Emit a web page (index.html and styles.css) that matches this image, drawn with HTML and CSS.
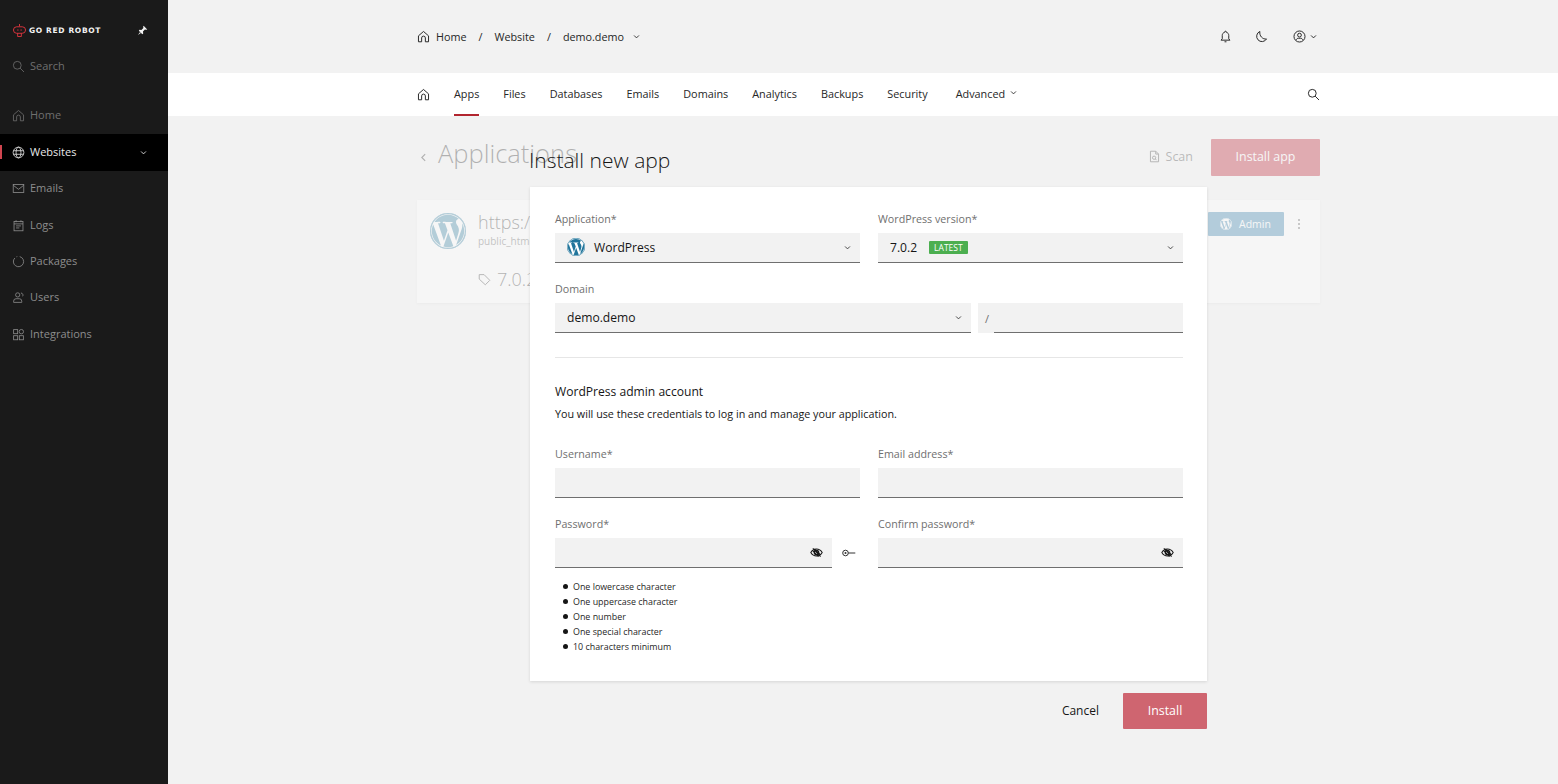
FILE: index.html
```html
<!DOCTYPE html>
<html lang="en">
<head>
<meta charset="utf-8">
<title>Install new app</title>
<link rel="stylesheet" href="styles.css">
</head>
<body>
<svg class="defs" aria-hidden="true">
  <symbol id="home" viewBox="0 0 16 16"><path d="M1.800 7.200 8 1.800l6.200 5.400V14.500h-3.900V9.800a2.300 2.300 0 0 0-4.600 0v4.700H1.800z"/></symbol>
  <symbol id="search" viewBox="0 0 16 16"><circle cx="6.500" cy="6.500" r="4.800"/><path d="m10 10 4.800 4.800"/></symbol>
  <symbol id="globe" viewBox="0 0 16 16"><circle cx="8" cy="8" r="6.600"/><ellipse cx="8" cy="8" rx="3" ry="6.600"/><path d="M1.800 5.800h12.400M1.800 10.200h12.400"/></symbol>
  <symbol id="mail" viewBox="0 0 16 16"><rect x="1.500" y="3" width="13" height="10"/><path d="m1.500 4 6.500 5 6.500-5"/></symbol>
  <symbol id="logs" viewBox="0 0 16 16"><rect x="2.500" y="3" width="11" height="11.500"/><path d="M5 1.500V4M11 1.500V4M2.500 6h11M5 8.500h6M5 11h4"/></symbol>
  <symbol id="pkg" viewBox="0 0 16 16"><path d="M9.500 2a6.300 6.300 0 1 1-6 1.700M5.500 2.200l1-.3"/></symbol>
  <symbol id="users" viewBox="0 0 16 16"><circle cx="7" cy="4.800" r="2.600"/><path d="M2 14v-1.500A3 3 0 0 1 5 9.500h4a3 3 0 0 1 3 3V14zM11 2.500a2.500 2.500 0 0 1 2 4"/></symbol>
  <symbol id="integrations" viewBox="0 0 16 16"><rect x="2" y="2" width="5" height="5"/><circle cx="11.500" cy="4.500" r="2.700"/><rect x="2" y="9.500" width="5" height="5"/><rect x="9" y="9.500" width="5" height="5"/></symbol>
  <symbol id="chev" viewBox="0 0 8 8"><path d="m1.200 2.800 2.800 2.800 2.800-2.800"/></symbol>
  <symbol id="wp" viewBox="0 0 24 24"><circle class="wp-disc" cx="12" cy="12" r="12"/><path class="wp-mark" d="M21.469 6.825c.84 1.537 1.318 3.3 1.318 5.175 0 3.979-2.156 7.456-5.363 9.325l3.295-9.527c.615-1.54.82-2.771.82-3.864 0-.405-.026-.78-.07-1.11m-7.981.105c.647-.03 1.232-.105 1.232-.105.582-.075.514-.93-.067-.899 0 0-1.755.135-2.88.135-1.064 0-2.85-.15-2.85-.15-.585-.03-.661.855-.075.885 0 0 .54.061 1.125.09l1.68 4.605-2.37 7.08L5.354 6.9c.649-.03 1.234-.1 1.234-.1.585-.075.516-.93-.065-.896 0 0-1.746.138-2.874.138-.2 0-.438-.008-.69-.015C4.911 3.15 8.235 1.215 12 1.215c2.809 0 5.365 1.072 7.286 2.833-.046-.003-.091-.009-.141-.009-1.06 0-1.812.923-1.812 1.914 0 .89.513 1.643 1.06 2.531.411.72.89 1.643.89 2.977 0 .915-.354 1.994-.821 3.479l-1.075 3.585-3.9-11.61.001.014zM12 22.784c-1.059 0-2.081-.153-3.048-.437l3.237-9.406 3.315 9.087c.024.053.05.101.078.149-1.12.393-2.325.609-3.582.609M1.211 12c0-1.564.336-3.05.935-4.39L7.29 21.709C3.694 19.96 1.212 16.271 1.211 12M12 0C5.385 0 0 5.385 0 12s5.385 12 12 12 12-5.385 12-12S18.615 0 12 0"/><circle class="wp-ring" cx="12" cy="12" r="11.600"/></symbol>
  <symbol id="eyeoff" viewBox="0 0 16 16"><path d="M1 8s2.600-4.300 7-4.300S15 8 15 8s-2.600 4.300-7 4.300S1 8 1 8z"/><circle cx="8" cy="8" r="2.800"/><path d="M3.500 3l9.500 10M5.500 3.500l7.500 7.500M3 5.500l7.500 7.500"/></symbol>
</svg>
<div class="app">
  <aside class="sidebar">
    <div class="brand">
      <svg class="brand-mark" viewBox="0 0 14 14"><path d="M7 0v2.500M4 3h6a3.500 3.500 0 0 1 0 7H4a3.500 3.500 0 0 1 0-7zM0 6.500h.5M13.500 6.500h.5M5 10v3.500h4V10M4.500 6.500h1.500M8 6.500h1.500"/></svg>
      <span class="brand-name">GO RED ROBOT</span>
      <svg class="pin" viewBox="0 0 12 12"><path d="M7.200.8 11.200 4.800 10 5.300 8.600 5 6.500 7.200 6.800 9.300 5.800 10 2 6.200 2.700 5.200 4.800 5.500 7 3.400 6.700 2zM3.600 7.400 1 11l3.600-2.600z"/></svg>
    </div>
    <div class="side-item side-search"><svg class="ico"><use href="#search"/></svg>Search</div>
    <nav class="side-nav">
      <div class="side-item dim"><svg class="ico"><use href="#home"/></svg>Home</div>
      <div class="side-item active"><svg class="ico"><use href="#globe"/></svg>Websites<svg class="chev side-chev"><use href="#chev"/></svg></div>
      <div class="side-item"><svg class="ico"><use href="#mail"/></svg>Emails</div>
      <div class="side-item"><svg class="ico"><use href="#logs"/></svg>Logs</div>
      <div class="side-item"><svg class="ico"><use href="#pkg"/></svg>Packages</div>
      <div class="side-item"><svg class="ico"><use href="#users"/></svg>Users</div>
      <div class="side-item"><svg class="ico"><use href="#integrations"/></svg>Integrations</div>
    </nav>
  </aside>
  <main class="main">
    <header class="topbar">
      <div class="crumbs">
        <svg class="ico ico-dark"><use href="#home"/></svg>
        <span class="crumb-home">Home</span><span class="sep">/</span><span>Website</span><span class="sep">/</span><span>demo.demo</span>
        <svg class="chev crumb-chev"><use href="#chev"/></svg>
      </div>
      <div class="top-actions">
        <svg class="ico ico-dark" viewBox="0 0 16 16"><path d="M8 1.500a1 1 0 0 1 1 1v.300c2 .5 3 2 3 4v4l1.500 1.700h-11L4 10.800v-4c0-2 1-3.500 3-4v-.300a1 1 0 0 1 1-1zM6.800 14.500h2.400"/></svg>
        <svg class="ico ico-dark" viewBox="0 0 16 16"><path d="M6 1.800a6.500 6.500 0 1 0 8.200 9.200C9.500 12 5 7 6 1.800z"/></svg>
        <div class="user">
          <svg class="ico ico-dark" viewBox="0 0 16 16"><circle cx="8" cy="8" r="6.800"/><circle cx="8" cy="6.300" r="2.300"/><path d="M3.800 12.500c.5-1.600 1.500-2.300 2.800-2.300h2.800c1.300 0 2.300.7 2.800 2.300"/></svg>
          <svg class="chev"><use href="#chev"/></svg>
        </div>
      </div>
    </header>
    <div class="tabs">
      <svg class="ico ico-dark"><use href="#home"/></svg>
      <span class="tab tab-first current">Apps</span>
      <span class="tab">Files</span>
      <span class="tab">Databases</span>
      <span class="tab">Emails</span>
      <span class="tab">Domains</span>
      <span class="tab">Analytics</span>
      <span class="tab">Backups</span>
      <span class="tab">Security</span>
      <span class="tab tab-adv">Advanced<svg class="chev adv-chev"><use href="#chev"/></svg></span>
      <svg class="ico ico-dark tab-search"><use href="#search"/></svg>
    </div>
    <section class="content">
      <div class="page-head">
        <svg class="chev back" viewBox="0 0 8 8"><path d="M5.500 1 2.500 4l3 3"/></svg>
        <h1>Applications</h1>
        <span class="scan"><svg class="ico ico-dark" viewBox="0 0 16 16"><path d="M3 1.500h6.500L13 5v9.500H3zM9.500 1.500V5H13"/><circle cx="7.500" cy="9.500" r="2"/><path d="m9 11 1.500 1.500"/></svg>Scan</span>
        <span class="btn-primary">Install app</span>
      </div>
      <article class="app-card">
        <svg class="wp wp-big"><use href="#wp"/></svg>
        <div class="app-info">
          <div class="app-url">https://demo.demo</div>
          <div class="app-path">public_html</div>
          <div class="app-ver"><svg class="ico ico-dark" viewBox="0 0 16 16"><path d="M1.500 2h6l7 7-5.500 5.500-7.500-7zM4.800 5.200h.1"/></svg>7.0.2</div>
        </div>
        <div class="app-actions">
          <span class="btn-admin"><svg class="wp wp-small"><use href="#wp"/></svg>Admin</span>
          <svg class="dots" viewBox="0 0 4 12"><circle cx="2" cy="2" r="1"/><circle cx="2" cy="6" r="1"/><circle cx="2" cy="10" r="1"/></svg>
        </div>
      </article>
      <div class="overlay">
        <div class="modal">
          <h2>Install new app</h2>
          <form class="modal-card">
            <div class="row">
              <div class="field">
                <label>Application*</label>
                <div class="input select"><svg class="wp wp-select"><use href="#wp"/></svg><span>WordPress</span><svg class="chev"><use href="#chev"/></svg></div>
              </div>
              <div class="field">
                <label>WordPress version*</label>
                <div class="input select"><span>7.0.2</span><span class="badge">LATEST</span><svg class="chev"><use href="#chev"/></svg></div>
              </div>
            </div>
            <div class="domain-field">
              <label>Domain</label>
              <div class="domain-row">
                <div class="input select domain"><span>demo.demo</span><svg class="chev"><use href="#chev"/></svg></div>
                <div class="path"><span class="slash">/</span><div class="path-input"></div></div>
              </div>
            </div>
            <hr>
            <h3>WordPress admin account</h3>
            <p>You will use these credentials to log in and manage your application.</p>
            <div class="row row-user">
              <div class="field"><label>Username*</label><div class="input"></div></div>
              <div class="field"><label>Email address*</label><div class="input"></div></div>
            </div>
            <div class="row row-pass">
              <div class="field">
                <label>Password*</label>
                <div class="pass-row">
                  <div class="input pass"><svg class="eye"><use href="#eyeoff"/></svg></div>
                  <svg class="key" viewBox="0 0 14 8"><circle cx="3.500" cy="4" r="2.800"/><circle class="solid" cx="3.500" cy="4" r="1"/><path d="M6.300 4h7"/></svg>
                </div>
              </div>
              <div class="field">
                <label>Confirm password*</label>
                <div class="input pass"><svg class="eye"><use href="#eyeoff"/></svg></div>
              </div>
            </div>
            <ul class="rules">
              <li>One lowercase character</li>
              <li>One uppercase character</li>
              <li>One number</li>
              <li>One special character</li>
              <li>10 characters minimum</li>
            </ul>
          </form>
          <div class="modal-foot">
            <span class="cancel">Cancel</span>
            <span class="btn-install">Install</span>
          </div>
        </div>
      </div>
    </section>
  </main>
</div>
</body>
</html>
```

FILE: styles.css
```css
* { box-sizing: border-box; }
html, body { margin: 0; height: 100%; }
body {
  font-family: "Open Sans", "Noto Sans", sans-serif;
  font-size: 12px;
  color: #161616;
  background: #f2f2f2;
  overflow: hidden;
}
.defs { display: none; }
svg { fill: none; stroke: currentColor; stroke-width: 1; flex: none; }
.solid { fill: currentColor; stroke: none; }
.app { display: flex; height: 784px; }

/* sidebar */
.sidebar { width: 168px; flex: none; background: #1a1a1a; color: #8d8d8d; }
.brand { height: 48px; padding: 12px 0 0 13px; display: flex; align-items: center; }
.brand-mark { width: 13px; height: 13px; color: #e0353f; margin-right: 3px; }
.brand-name {
  font-family: "DejaVu Sans", sans-serif;
  font-size: 7.500px;
  font-weight: 700;
  letter-spacing: .650px;
  color: #f4f4f4;
  width: 73px;
  white-space: nowrap;
}
.pin { width: 11px; height: 11px; margin-left: 35px; fill: #f4f4f4; stroke: none; }
.side-item {
  height: 36.400px;
  padding: 0 0 2px 12px;
  display: flex;
  align-items: center;
  font-size: 11px;
  color: #8d8d8d;
  position: relative;
}
.side-item .ico { margin-right: 5px; margin-top: 2px; }
.side-search { height: 36px; color: #6f6f6f; }
.dim { color: #6f6f6f; }
.side-nav { margin-top: 13.800px; }
.active { background: #000; color: #e8e8e8; }
.active::before {
  content: "";
  position: absolute;
  left: 0;
  top: 11px;
  width: 2px;
  height: 14px;
  background: #d0454f;
}
.side-chev { margin-left: auto; margin-right: 21px; margin-top: 2px; }
.ico { width: 13px; height: 13px; }
.ico-dark { color: #262626; stroke-width: 1.200; }
.chev { width: 7px; height: 7px; }

/* header */
.main { flex: 1; display: flex; flex-direction: column; min-width: 0; }
.topbar {
  height: 73px;
  flex: none;
  padding: 0 241px 0 249px;
  display: flex;
  align-items: center;
  justify-content: space-between;
}
.crumbs { display: flex; align-items: center; font-size: 10.800px; color: #262626; }
.crumb-home { margin-left: 6px; }
.sep { margin: 0 12px; }
.crumb-chev { margin-left: 9px; }
.top-actions { display: flex; align-items: center; gap: 23px; }
.user { display: flex; align-items: center; gap: 4px; margin-left: 2px; }
.tabs {
  height: 43px;
  flex: none;
  background: #fff;
  padding: 0 238px 0 249px;
  display: flex;
  align-items: center;
  font-size: 10.850px;
  color: #262626;
}
.tab {
  height: 43px;
  display: flex;
  align-items: center;
  margin-right: 24px;
  padding-bottom: 2px;
  position: relative;
}
.tab-first { margin-left: 24px; }
.current::after {
  content: "";
  position: absolute;
  left: 0;
  right: 0;
  bottom: 0;
  height: 2px;
  background: #b2252f;
}
.tab-adv { margin-left: 4px; margin-right: 0; }
.adv-chev { margin-left: 5px; margin-top: -3px; }
.tab-search { margin-left: auto; }

/* content behind the dialog */
.content { flex: 1; position: relative; padding: 23px 238px 0 249px; }
.page-head { display: flex; align-items: center; height: 37px; }
.back { width: 9px; height: 9px; color: #161616; margin-left: 2px; }
h1 { margin: 0 0 9px 10px; font-size: 25.500px; font-weight: 300; color: #161616; flex: 1; line-height: 30px; }
.scan { display: flex; align-items: center; gap: 5px; font-size: 12.500px; color: #333; margin-right: 18px; padding-bottom: 2px; }
.btn-primary {
  width: 109px;
  height: 37px;
  padding-bottom: 2px;
  background: #b6051a;
  color: #fff;
  font-size: 12.400px;
  display: flex;
  align-items: center;
  justify-content: center;
  border-radius: 1px;
}
.app-card {
  height: 103px;
  margin-top: 24px;
  background: #fff;
  box-shadow: 0 1px 3px rgba(0,0,0,.1);
  padding: 13px 19px 0 13px;
  display: flex;
}
.wp { --disc: #21759b; --mark: #fff; }
.wp-disc { fill: var(--disc); stroke: none; }
.wp-mark { fill: var(--mark); stroke: none; }
.wp-ring { fill: none; stroke: var(--disc); stroke-width: .800; }
.wp-big { width: 36px; height: 36px; }
.app-info { margin-left: 12px; flex: 1; min-width: 0; }
.app-url { font-size: 18px; font-weight: 300; line-height: 20px; margin-top: -1px; color: #161616; }
.app-path { font-size: 10px; line-height: 14px; margin-top: 2px; color: #525252; }
.app-ver { display: flex; align-items: center; gap: 6px; font-size: 18px; font-weight: 300; margin-top: 19px; line-height: 24px; }
.app-actions { display: flex; align-items: flex-start; }
.btn-admin {
  width: 76px;
  height: 24px;
  margin-top: -1px;
  background: #2174a6;
  color: #fff;
  font-size: 10.500px;
  display: flex;
  align-items: center;
  padding-left: 12px;
  gap: 7px;
  border-radius: 1px;
}
.wp-small { width: 12px; height: 12px; --disc: #fff; --mark: #2174a6; }
.dots { width: 4px; height: 12px; margin: 5px 0 0 13px; fill: #333; stroke: none; }

/* dialog */
.overlay {
  position: absolute;
  inset: 0;
  background: rgba(242,242,242,.7);
  padding: 34px 0 0 362px;
}
.modal { width: 677px; }
h2 {
  margin: 0 0 16px -1px;
  font-size: 21px;
  font-weight: 300;
  line-height: 21px;
  color: #161616;
}
.modal-card {
  background: #fff;
  height: 494px;
  padding: 24px 24px 0 25px;
  box-shadow: 0 1px 3px rgba(0,0,0,.12);
}
.row { display: grid; grid-template-columns: 305px 305px; gap: 18px; }
label { display: block; font-size: 10.700px; line-height: 16px; color: #6f6f6f; margin-bottom: 6px; }
.input {
  height: 30px;
  background: #f2f2f2;
  border-bottom: 1px solid #6f6f6f;
  display: flex;
  align-items: center;
}
.select { padding: 0 9px 1px 12px; font-size: 12.100px; color: #161616; }
.select .chev { margin-left: auto; color: #333; }
.wp-select { width: 18px; height: 18px; margin-right: 9px; }
.badge {
  margin-left: 12px;
  background: #4caf50;
  color: #fff;
  font-size: 8.500px;
  line-height: 13px;
  padding: 0 5px;
  border-radius: 1px;
}
.domain-field { margin-top: 18px; }
.domain-row { display: flex; gap: 7px; }
.domain { width: 416px; }
.path {
  width: 205px;
  height: 30px;
  background: #f2f2f2;
  display: flex;
  align-items: center;
  padding-left: 7px;
  color: #6f6f6f;
  font-size: 11px;
}
.slash { width: 9px; }
.path-input { flex: 1; height: 30px; border-bottom: 1px solid #6f6f6f; }
hr { border: 0; border-top: 1px solid #e6e6e6; margin: 24px 0 0; }
h3 { margin: 24px 0 0; font-size: 12.100px; font-weight: 400; line-height: 20px; color: #161616; }
p { margin: 2px 0 0; font-size: 10.750px; line-height: 20px; color: #161616; }
.row-user { margin-top: 22px; }
.row-pass { margin-top: 18px; }
.pass-row { display: flex; align-items: center; }
.pass { flex: 1; justify-content: flex-end; padding-right: 9px; }
.eye { width: 13px; height: 13px; color: #161616; stroke-width: 1.300; }
.key { width: 14px; height: 8px; margin: 0 4px 0 10px; color: #333; }
.rules { list-style: none; margin: 11px 0 0; padding: 0 0 0 18px; font-size: 8.900px; line-height: 15px; color: #262626; }
.rules li { position: relative; }
.rules li::before {
  content: "";
  position: absolute;
  left: -10px;
  top: 5px;
  width: 5px;
  height: 5px;
  border-radius: 50%;
  background: #161616;
}
.modal-foot { display: flex; justify-content: flex-end; align-items: center; margin-top: 12px; }
.cancel { font-size: 12px; color: #161616; margin-right: 24px; padding-bottom: 2px; }
.btn-install {
  width: 84px;
  height: 36px;
  padding-bottom: 2px;
  background: #cf6570;
  color: #fff;
  font-size: 12.400px;
  display: flex;
  align-items: center;
  justify-content: center;
  border-radius: 1px;
}
```
